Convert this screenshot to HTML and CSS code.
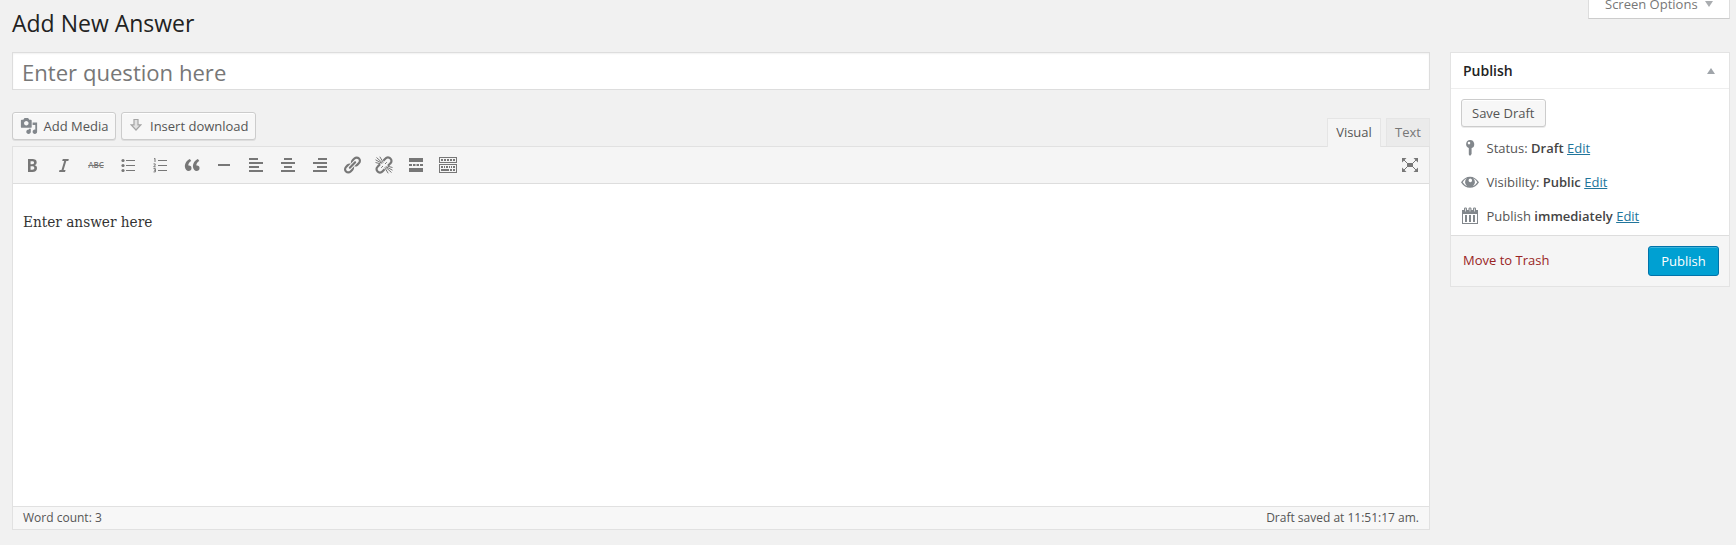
FILE: index.html
```html
<!DOCTYPE html>
<html lang="en">
<head>
<meta charset="utf-8">
<title>Add New Answer</title>
<link rel="stylesheet" href="styles.css">
</head>
<body>
<div class="page">
  <header class="top">
    <h1 class="title">Add New Answer</h1>
    <div class="screen-options">Screen Options <span class="tri-down"></span></div>
  </header>
  <div class="columns">
    <main class="main">
      <input class="question" type="text" placeholder="Enter question here">
      <div class="editor-tools">
        <button class="button media">
          <svg class="media-icon" viewBox="0 0 20 20"><path d="M13 11V4c0-.55-.45-1-1-1h-1.67L9 1H5L3.67 3H2c-.55 0-1 .45-1 1v7c0 .55.45 1 1 1h10c.55 0 1-.45 1-1zM7 4.5c1.38 0 2.5 1.12 2.5 2.5S8.38 9.5 7 9.5 4.5 8.38 4.5 7 5.62 4.5 7 4.5zM14 6h5v10.5c0 1.38-1.12 2.5-2.5 2.5S14 17.88 14 16.5s1.12-2.5 2.5-2.5c.17 0 .34.02.5.05V9h-3V6zm-4 8.05V13h2v3.5c0 1.38-1.12 2.5-2.5 2.5S7 17.88 7 16.5 8.12 14 9.5 14c.17 0 .34.02.5.05z"/></svg>
          <span>Add Media</span>
        </button>
        <button class="button download">
          <svg class="download-icon" viewBox="0 0 12 14"><path d="M4 1.5h4v5.3h2.8L6 12 1.200 6.800H4z" fill="#e2e2e2" stroke="#a5a5a5" stroke-width="1.200"/></svg>
          <span>Insert download</span>
        </button>
        <div class="tabs">
          <div class="tab active">Visual</div>
          <div class="tab">Text</div>
        </div>
      </div>
      <section class="editor">
        <div class="toolbar">
          <svg class="icon" viewBox="0 0 20 20"><path d="M6 4v13h4.540c1.370 0 2.460-.33 3.260-1 .8-.66 1.200-1.580 1.200-2.770 0-.84-.17-1.510-.51-2.010s-.9-.85-1.670-1.030v-.09c.57-.1 1.020-.4 1.360-.9s.51-1.130.51-1.910c0-1.140-.39-1.980-1.170-2.500C12.750 4.260 11.500 4 9.780 4H6zm2.570 5.150V6.260h1.360c.73 0 1.270.11 1.610.32.34.22.51.58.51 1.070 0 .54-.16.92-.47 1.150s-.82.35-1.510.35h-1.500zm0 2.190h1.600c1.440 0 2.160.53 2.160 1.610 0 .6-.17 1.050-.51 1.340s-.86.43-1.570.43H8.570v-3.380z"/></svg>
          <svg class="icon" viewBox="0 0 20 20"><path d="M14.800 4h-6l-.6 2h2l-2.700 9h-2L5 17h6l.6-2h-2l2.700-9h2l.5-2z"/></svg>
          <span class="icon strike">ABC</span>
          <svg class="icon" viewBox="0 0 20 20"><circle cx="5" cy="5.500" r="1.600"/><circle cx="5" cy="10.500" r="1.600"/><circle cx="5" cy="15.500" r="1.600"/><path d="M8 5h9v1H8zM8 10h9v1H8zM8 15h9v1H8z"/></svg>
          <svg class="icon" viewBox="0 0 20 20"><path d="M8 5h9v1H8zM8 10h9v1H8zM8 15h9v1H8z"/><path class="line" d="M4 4l1-.7V7M3.500 8.900h1.700v1.200l-1.500 1.700h2M3.500 13.600h1.900v3.300H3.500M4 15.200h1.400"/></svg>
          <svg class="icon" viewBox="0 0 20 20"><path d="M9.490 13.220c0-.74-.2-1.380-.61-1.900-.62-.78-1.830-.88-2.530-.72-.29-1.650 1.110-3.750 2.920-4.650L7.880 4c-2.730 1.300-5.420 4.280-4.960 8.050C3.210 14.430 4.590 16 6.540 16c.85 0 1.560-.25 2.120-.75s.83-1.180.83-2.030zm8.050 0c0-.74-.2-1.380-.61-1.900-.63-.78-1.830-.88-2.530-.72-.29-1.650 1.110-3.750 2.920-4.650L15.930 4c-2.730 1.300-5.410 4.280-4.950 8.050.29 2.380 1.660 3.950 3.610 3.950.85 0 1.560-.25 2.120-.75s.83-1.180.83-2.030z"/></svg>
          <svg class="icon" viewBox="0 0 20 20"><path d="M4 9h12v2H4z"/></svg>
          <svg class="icon" viewBox="0 0 20 20"><path d="M3 3h9v2H3zM3 7h14v2H3zM3 11h10v2H3zM3 15h14v2H3z"/></svg>
          <svg class="icon" viewBox="0 0 20 20"><path d="M6 3h8v2H6zM3 7h14v2H3zM6 11h8v2H6zM3 15h14v2H3z"/></svg>
          <svg class="icon" viewBox="0 0 20 20"><path d="M8 3h9v2H8zM3 7h14v2H3zM7 11h10v2H7zM3 15h14v2H3z"/></svg>
          <svg class="icon" viewBox="0 0 20 20"><path d="M17.740 2.760c1.680 1.690 1.680 4.410 0 6.100l-1.530 1.520c-1.120 1.120-2.700 1.470-4.140 1.090l2.620-2.610.76-.77.76-.76c.84-.84.84-2.200 0-3.040-.84-.85-2.200-.85-3.040 0l-.77.76-3.380 3.380c-.37-1.440-.02-3.020 1.100-4.140l1.520-1.530c1.690-1.680 4.420-1.680 6.100 0zM8.590 13.430l5.340-5.340c.42-.42.42-1.100 0-1.520-.44-.43-1.130-.39-1.530 0l-5.330 5.340c-.42.42-.42 1.100 0 1.520.44.43 1.130.39 1.520 0zm-.76 2.290l4.140-4.150c.38 1.440.03 3.020-1.090 4.140l-1.520 1.530c-1.690 1.680-4.410 1.680-6.100 0-1.680-1.680-1.680-4.420 0-6.100l1.530-1.520c1.120-1.120 2.700-1.470 4.140-1.100l-4.140 4.150c-.85.84-.85 2.200 0 3.050.84.84 2.200.84 3.040 0z"/></svg>
          <svg class="icon" viewBox="0 0 20 20"><path class="thick" d="M9.300 5.700L11.500 3.500a3.200 3.200 0 0 1 4.900 0 3.200 3.200 0 0 1 0 4.800L14 10.700M10.600 14.300l-2.200 2.200a3.200 3.200 0 0 1-4.800 0 3.200 3.200 0 0 1 0-4.800L6 9.300"/><path class="line" d="M1.500 4.800L8 8.300M2.500 2.500L8.600 8M5.800 1.700L9.300 7.500M18.500 15.200L12 11.700M17.500 17.500L11.400 12M14.200 18.300L10.700 12.500M1.500 7.500L6.500 8.800M18.500 12.500L13.500 11.200M12.800 7.200L11 9M7.200 12.800L9 11"/></svg>
          <svg class="icon" viewBox="0 0 20 20"><path d="M3 3h14v4H3zM3 9h3v2H3zM7 9h2.500v2H7zM10.500 9H13v2h-2.500zM14 9h3v2h-3zM3 13h14v4H3z"/></svg>
          <svg class="icon" viewBox="0 0 20 20"><path fill-rule="evenodd" d="M1 2h18v6H1zm1 1v4h16V3zM1 9h18v9H1zm1 1v7h16v-7z"/><path d="M3 4h2v2H3zM6 4h2v2H6zM9 4h2v2H9zM12 4h2v2h-2zM15 4h2v2h-2zM3 11h2v2H3zM6 11h1v2H6zM8 11h2v2H8zM11 11h1v2h-1zM13 11h1v2h-1zM15 11h2v2h-2zM3 14h8v2H3zM12 14h2v2h-2zM15 14h2v2h-2z"/></svg>
          <svg class="icon expand" viewBox="0 0 20 20"><path d="M7 8h6v4H7zM2 3h4.500L2 7.500zM18 3h-4.500L18 7.500zM2 17h4.500L2 12.500zM18 17h-4.500l4.500-4.500z"/><path class="line" d="M3 4l5 5M17 4l-5 5M3 16l5-5M17 16l-5-5"/></svg>
        </div>
        <div class="content">Enter answer here</div>
        <div class="statusbar"><span>Word count: 3</span><span>Draft saved at 11:51:17 am.</span></div>
      </section>
    </main>
    <aside class="publish-box">
      <div class="box-head"><h2 class="box-title">Publish</h2><span class="tri-up"></span></div>
      <div class="box-body">
        <button class="button save">Save Draft</button>
        <div class="row">
          <svg class="row-icon" viewBox="1 1 18 18"><path fill-rule="evenodd" d="M10 2a4.200 4.200 0 0 1 1.600 8.100V16L10 18l-1.200-1.500v-6.400A4.200 4.200 0 0 1 10 2zM9 3.800a1.300 1.300 0 1 0 0 2.600 1.300 1.300 0 0 0 0-2.600z"/></svg>
          <span>Status: <b>Draft</b> <a href="#">Edit</a></span>
        </div>
        <div class="row">
          <svg class="row-icon" viewBox="1 1 18 18"><path fill-rule="evenodd" d="M1 10.300C3.300 6.600 6.500 4.700 10 4.700s6.700 1.900 9 5.600c-2.300 3.700-5.500 5.500-9 5.500s-6.700-1.800-9-5.500zm1.700 0c1.300 2 2.700 3.200 4.400 3.900a5 5 0 0 1-.2-7.900c-1.700.8-3.100 2.100-4.200 4zm14.600 0c-1.100-1.900-2.500-3.200-4.200-4a5 5 0 0 1-.2 7.900c1.700-.7 3.100-1.900 4.400-3.900zM10.300 6.600a1.800 1.800 0 1 0 1.800 2.200 2 2 0 0 0-1.800-2.200z"/></svg>
          <span>Visibility: <b>Public</b> <a href="#">Edit</a></span>
        </div>
        <div class="row">
          <svg class="row-icon" viewBox="1 1 18 18"><path fill-rule="evenodd" d="M2 4h2V2.500C4 1 7 1 7 2.500V4h1.500V2.500c0-1.500 3-1.500 3 0V4H13V2.500c0-1.500 3-1.500 3 0V4h2v14H2zm1 4v9h14V8z"/><path d="M5 9h2v7H5zM9 9h2v7H9zM13 9h2v7h-2z"/><path d="M5.500 2.500v3M10 2.500v3M14.500 2.500v3" stroke="#fff" stroke-width=".7"/></svg>
          <span>Publish <b>immediately</b> <a href="#">Edit</a></span>
        </div>
      </div>
      <div class="box-foot"><a class="trash" href="#">Move to Trash</a><button class="primary">Publish</button></div>
    </aside>
  </div>
</div>
</body>
</html>
```
FILE: styles.css
```css
* { box-sizing: border-box; }
body {
  margin: 0;
  background: #f1f1f1;
  color: #555;
  font: 13px/18px "Open Sans", sans-serif;
  overflow: hidden;
}
.page { height: 545px; padding: 0 6px 0 12px; }
.top { display: flex; justify-content: space-between; height: 52px; }
.title { margin: 8px 0 0; color: #222; font-size: 23px; font-weight: 400; line-height: 31px; }
.screen-options {
  display: flex;
  align-items: flex-start;
  gap: 7px;
  width: 142px;
  height: 19px;
  padding: 0 0 0 16px;
  background: #fff;
  border: 1px solid #ddd;
  border-top: 0;
  border-bottom-color: #ccc;
  color: #777;
  line-height: 8px;
}
.tri-down { margin-top: 1px; border: 4.500px solid transparent; border-top: 6px solid #aaadb0; border-bottom: 0; }
.columns { display: flex; align-items: flex-start; gap: 20px; }
.main { width: 1418px; }
.question {
  display: block;
  width: 100%;
  height: 38px;
  padding: 2px 9px 1px;
  background: #fff;
  border: 1px solid #ddd;
  box-shadow: inset 0 1px 2px rgba(0,0,0,.06);
  font: 22.100px "Open Sans", sans-serif;
}
.question::placeholder { color: #777; opacity: 1; }
.editor-tools { display: flex; align-items: flex-start; gap: 5px; height: 56px; padding-top: 22px; }
.button {
  display: flex;
  align-items: center;
  height: 28px;
  padding: 0 10px;
  background: #f7f7f7;
  border: 1px solid #ccc;
  border-radius: 3px;
  box-shadow: inset 0 1px 0 #fff, 0 1px 0 rgba(0,0,0,.08);
  color: #555;
  font: 13px/26px "Open Sans", sans-serif;
  white-space: nowrap;
}
.media { width: 104px; padding: 0 0 0 7px; gap: 5.500px; }
.media-icon { width: 18px; height: 18px; fill: #82878c; }
.download { width: 135px; padding: 0 0 0 8px; gap: 8px; }
.download-icon { width: 12px; height: 14px; margin-top: -3px; }
.tabs { display: flex; gap: 5px; margin: 6px 0 0 auto; }
.tab {
  width: 44px;
  height: 28px;
  background: #ebebeb;
  border: 1px solid #e5e5e5;
  border-bottom: 0;
  color: #777;
  line-height: 27px;
  text-align: center;
}
.tab.active { width: 54px; height: 29px; position: relative; background: #f5f5f5; color: #555; }
.editor { height: 384px; border: 1px solid #e1e1e1; background: #fff; display: flex; flex-direction: column; }
.toolbar { display: flex; align-items: center; gap: 12px; height: 37px; padding: 0 9px; background: #f5f5f5; border-bottom: 1px solid #ddd; }
.icon { flex: none; width: 20px; height: 20px; fill: #777; }
.strike { color: #777; font-size: 8px; font-weight: 600; line-height: 20px; text-align: center; text-decoration: line-through; }
.line { fill: none; stroke: #777; stroke-width: 1; }
.thick { fill: none; stroke: #777; stroke-width: 2.200; }
.expand { margin-left: auto; }
.content { flex: 1; padding: 26px 10px 0; color: #333; font: 15.200px/24px "DejaVu Serif Condensed", "DejaVu Serif", serif; font-stretch: condensed; }
.statusbar { display: flex; justify-content: space-between; height: 23px; padding: 0 10px; background: #f7f7f7; border-top: 1px solid #e1e1e1; font-size: 12px; line-height: 22px; }
.publish-box { width: 280px; height: 235px; background: #fff; border: 1px solid #e3e3e3; }
.box-head { display: flex; align-items: center; justify-content: space-between; height: 36px; padding: 0 14px 0 12px; border-bottom: 1px solid #eee; }
.box-title { margin: 0; color: #222; font-size: 14px; font-weight: 600; line-height: 20px; }
.tri-up { border: 4px solid transparent; border-bottom: 6px solid #a0a5aa; border-top: 0; }
.box-body { height: 146px; padding: 10px 10px 0; }
.save { width: 85px; margin-bottom: 4px; }
.row { display: flex; align-items: center; gap: 7.500px; height: 34px; }
.row-icon { width: 18px; height: 18px; fill: #82878c; }
.row b { color: #444; font-weight: 600; }
.row a { color: #21759b; }
.box-foot { display: flex; align-items: center; justify-content: space-between; height: 51px; padding: 0 10px 0 12px; background: #f5f5f5; border-top: 1px solid #ddd; }
.trash { margin-bottom: 2px; color: #992424; text-decoration: none; }
.primary {
  width: 71px;
  height: 30px;
  padding: 0;
  background: #00a0d2;
  border: 1px solid #0073aa;
  border-radius: 3px;
  box-shadow: inset 0 1px 0 rgba(120,200,230,.5);
  color: #fff;
  font: 13px/28px "Open Sans", sans-serif;
}
```
